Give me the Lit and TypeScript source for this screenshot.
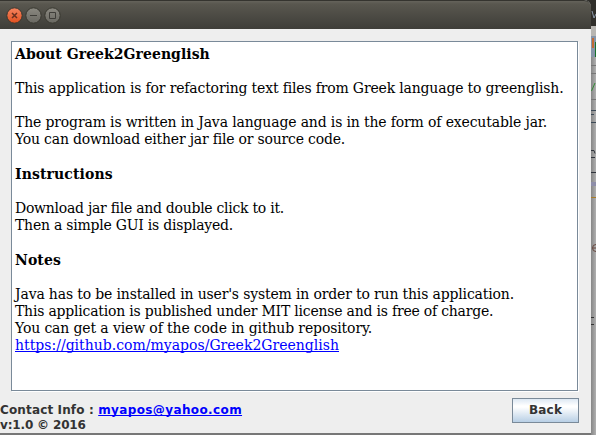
import { LitElement, html, css, svg } from "lit";
import { customElement } from "lit/decorators.js";

interface Line {
  text: string;
  kind?: "bold" | "link";
  spacing?: number;
}

const LINES: Line[] = [
  { text: "About Greek2Greenglish", kind: "bold", spacing: 0.04 },
  { text: "" },
  { text: "This application is for refactoring text files from Greek language to greenglish.", spacing: -0.17 },
  { text: "" },
  { text: "The program is written in Java language and is in the form of executable jar.", spacing: -0.15 },
  { text: "You can download either jar file or source code.", spacing: -0.2 },
  { text: "" },
  { text: "Instructions", kind: "bold", spacing: 0.12 },
  { text: "" },
  { text: "Download jar file and double click to it.", spacing: -0.27 },
  { text: "Then a simple GUI is displayed.", spacing: -0.23 },
  { text: "" },
  { text: "Notes", kind: "bold", spacing: 0.1 },
  { text: "" },
  { text: "Java has to be installed in user's system in order to run this application.", spacing: -0.16 },
  { text: "This application is published under MIT license and is free of charge.", spacing: -0.215 },
  { text: "You can get a view of the code in github repository.", spacing: -0.13 },
  { text: "https://github.com/myapos/Greek2Greenglish", kind: "link", spacing: 0.01 },
];

@customElement("title-bar")
class TitleBar extends LitElement {
  static styles = css`
    :host {
      display: block;
      height: 29px;
      box-sizing: border-box;
      border-radius: 0 7px 0 0;
      background: linear-gradient(#65635b 0, #59574f 3px, #3e3d38 28px, #3a3934);
      border-top: 1px solid #35342f;
    }
    svg {
      display: block;
    }
  `;
  render() {
    return html`<svg width="70" height="28" viewBox="0 1 70 28">
      <defs>
        <linearGradient id="close" x2="0" y2="1">
          <stop offset="0" stop-color="#f58560" />
          <stop offset="1" stop-color="#e2501f" />
        </linearGradient>
        <linearGradient id="plain" x2="0" y2="1">
          <stop offset="0" stop-color="#8b8981" />
          <stop offset="1" stop-color="#696861" />
        </linearGradient>
      </defs>
      ${[14.5, 33.5, 52.5].map(
        (x, i) => svg`<circle cx=${x} cy="15.5" r="7.7" fill=${i ? "url(#plain)" : "url(#close)"} stroke="#38372f" />`
      )}
      <path d="M12 13l5 5M17 13l-5 5" stroke="#69301f" stroke-width="1.5" />
      <path d="M30 15.5h7M49.5 12.5h6v6h-6z" fill="none" stroke="#3e3d38" />
    </svg>`;
  }
}

@customElement("desktop-edge")
class DesktopEdge extends LitElement {
  static styles = css`
    :host {
      display: block;
      height: 435px;
    }
    svg {
      display: block;
    }
  `;
  render() {
    return html`<svg width="5" height="435" viewBox="0 0 5 435">
      <defs>
        <linearGradient id="shade">
          <stop offset="0" stop-color="#868686" />
          <stop offset="1" stop-color="#b0b0b0" />
        </linearGradient>
      </defs>
      <path fill="url(#shade)" d="M0 0h5v435H0z" />
      <path fill="#302f2b" d="M0 0h5v26H0z" />
      <path fill="#b8b6b2" d="M0 26h5v10H0z" />
      <path fill="#8795a8" d="M0 36h5v21H0z" />
      <path fill="#c06a35" d="M1 38h2v10H1z" />
      <path fill="#17702b" d="M4 42h1v15H4z" />
      <path fill="#777" d="M0 65h5v1H0zM0 73h5v1H0zM0 99h5v1H0z" />
      <path d="M0.5 91l3.5-8" stroke="#348a36" fill="none" />
      <path d="M1 11l2 7 2-4" stroke="#8b98a8" fill="none" />
      <path d="M0 110.5h5M0 114.5h3M0 122.5h5" stroke="#3c4956" />
      <path d="M0 150.5h3l1 3M0 157.5h4M0 172.5h5" stroke="#30343c" fill="none" />
      <path fill="#8e8ea9" d="M0 182h5v4H0z" />
      <path fill="#a87c29" d="M0 197h5v1H0z" />
      <path d="M5 244.5Q1.5 244.5 1.5 248T5 251.5M2 248h3" stroke="#66453c" fill="none" />
      <path d="M0 317.5h3M0 324.5h3" stroke="#333" />
    </svg>`;
  }
}

@customElement("app-root")
class AppRoot extends LitElement {
  static styles = css`
    :host {
      display: grid;
      grid-template-columns: 591px 5px;
      width: 596px;
      height: 435px;
      overflow: hidden;
      background: linear-gradient(#302f2b 400px, #777 400px);
      font-family: "DejaVu Sans", sans-serif;
    }
    .window {
      height: 433px;
      background: #eee;
      border-radius: 0 7px 0 0;
    }
    .pane {
      box-sizing: border-box;
      width: 567px;
      height: 350px;
      margin: 12px 0 0 11px;
      border: 1px solid #7a8a99;
      box-shadow: 1px 1px 0 #fff;
      background: #fff;
      padding: 4px 0 0 3px;
      color: #000;
      font: 14px/17px "DejaVu Serif", serif;
      white-space: pre;
    }
    .line {
      height: 17px;
    }
    .bold {
      height: 17px;
      font-weight: 700;
    }
    .bold:not(:first-child) {
      padding-top: 1px;
    }
    .link {
      color: #00f;
      text-decoration: underline;
      text-decoration-skip-ink: none;
    }
    .footer {
      display: flex;
      justify-content: space-between;
      padding: 7px 12px 0 0;
      color: #333;
      font: bold 12px/15px "DejaVu Sans", sans-serif;
      white-space: nowrap;
    }
    .info {
      padding-top: 5px;
    }
    .label {
      letter-spacing: 0.14px;
    }
    .mail {
      letter-spacing: 0.38px;
    }
    .version {
      letter-spacing: -0.16px;
    }
    .back {
      box-sizing: border-box;
      width: 67px;
      height: 25px;
      border: 1px solid #7a8a99;
      padding: 0;
      color: #333;
      background: linear-gradient(#dde8f3, #fff 30%, #fff 35%, #b8cfe5);
      font: bold 12px/23px "DejaVu Sans", sans-serif;
      letter-spacing: 0.2px;
    }
  `;
  render() {
    return html`
      <div class="window">
        <title-bar></title-bar>
        <div class="pane">${LINES.map((l) => html`<div class=${l.kind === "bold" ? "bold" : "line"}><span class=${l.kind === "link" ? "link" : "text"} style="letter-spacing:${l.spacing ?? 0}px">${l.text}</span></div>`)}</div>
        <div class="footer">
          <div class="info">
            <div><span class="label">Contact Info : </span><span class="link mail">myapos@yahoo.com</span></div>
            <div class="version">v:1.0 © 2016</div>
          </div>
          <button class="back">Back</button>
        </div>
      </div>
      <desktop-edge></desktop-edge>
    `;
  }
}
